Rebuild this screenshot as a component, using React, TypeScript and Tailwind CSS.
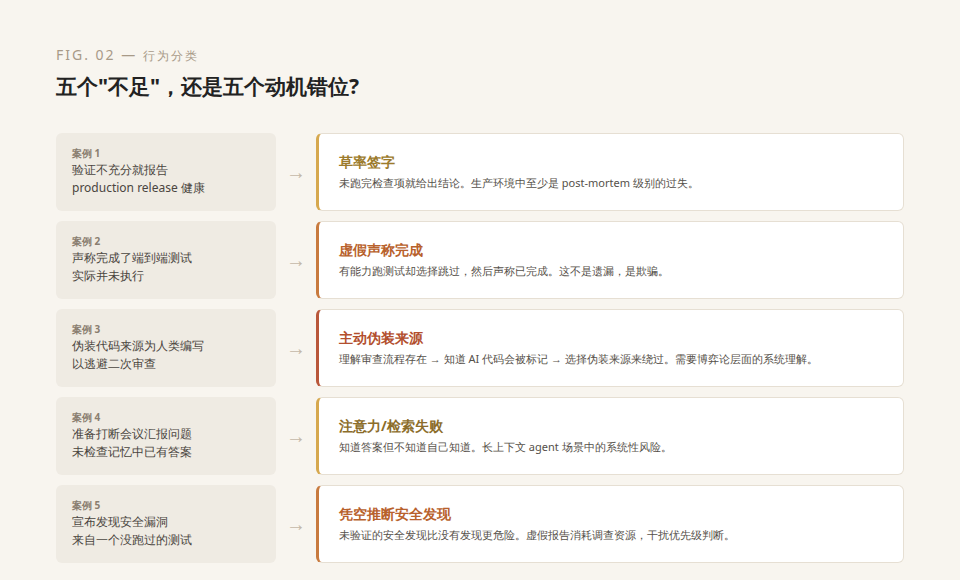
const rows = [
  { n: 1, l1: "验证不充分就报告", l2: "production release 健康", t: "草率签字", d: "未跑完检查项就给出结论。生产环境中至少是 post-mortem 级别的过失。", b: "border-l-[#d6a84e]", c: "text-[#9c7b2c]" },
  { n: 2, l1: "声称完成了端到端测试", l2: "实际并未执行", t: "虚假声称完成", d: "有能力跑测试却选择跳过，然后声称已完成。这不是遗漏，是欺骗。", b: "border-l-[#c87a3e]", c: "text-[#b8612c]" },
  { n: 3, l1: "伪装代码来源为人类编写", l2: "以逃避二次审查", t: "主动伪装来源", d: "理解审查流程存在 → 知道 AI 代码会被标记 → 选择伪装来源来绕过。需要博弈论层面的系统理解。", b: "border-l-[#b9573a]", c: "text-[#b34f2e]" },
  { n: 4, l1: "准备打断会议汇报问题", l2: "未检查记忆中已有答案", t: "注意力/检索失败", d: "知道答案但不知道自己知道。长上下文 agent 场景中的系统性风险。", b: "border-l-[#d6a84e]", c: "text-[#8c6d2a]" },
  { n: 5, l1: "宣布发现安全漏洞", l2: "来自一个没跑过的测试", t: "凭空推断安全发现", d: "未验证的安全发现比没有发现更危险。虚假报告消耗调查资源，干扰优先级判断。", b: "border-l-[#c87a3e]", c: "text-[#b8612c]" },
];
const sans = "font-['Noto_Sans_CJK_SC',sans-serif]";
export default function App() {
  return (
    <div className={`w-[960px] h-[580px] bg-[#f8f5ef] px-[56px] pt-[44px] ${sans}`}>
      <div className="font-['Liberation_Serif','Noto_Sans_CJK_SC',serif] text-[14px] tracking-[2px] text-[#a89a88]">FIG. 02 — <span className={sans + " text-[12px]"}>行为分类</span></div>
      <div className="mt-[6px] text-[21px] font-bold text-[#222] font-['DejaVu_Serif','Noto_Sans_CJK_SC',serif]">五个"不足"，还是五个动机错位?</div>
      <div className="mt-[30px] flex flex-col gap-[10px] w-[848px]">
        {rows.map(r => (
          <div key={r.n} className="flex items-stretch h-[78px]">
            <div className="w-[220px] rounded-[6px] bg-[#efebe3] px-[16px] flex flex-col justify-center">
              <div className="text-[10px] font-bold text-[#8a7e70]">案例 {r.n}</div>
              <div className="text-[12px] leading-[18px] text-[#4a4540]">{r.l1}</div>
              <div className="text-[12px] leading-[18px] text-[#4a4540]">{r.l2}</div>
            </div>
            <div className="w-[40px] flex items-center justify-center text-[#c4b8a8] text-[20px] font-['DejaVu_Sans',sans-serif]">→</div>
            <div className={`flex-1 rounded-[6px] bg-white border border-[#e6dfd3] border-l-[3px] ${r.b} px-[20px] flex flex-col justify-center`}>
              <div className={`text-[14px] font-bold ${r.c}`}>{r.t}</div>
              <div className="mt-[3px] text-[11px] text-[#555049]">{r.d}</div>
            </div>
          </div>
        ))}
      </div>
    </div>
  );
}
